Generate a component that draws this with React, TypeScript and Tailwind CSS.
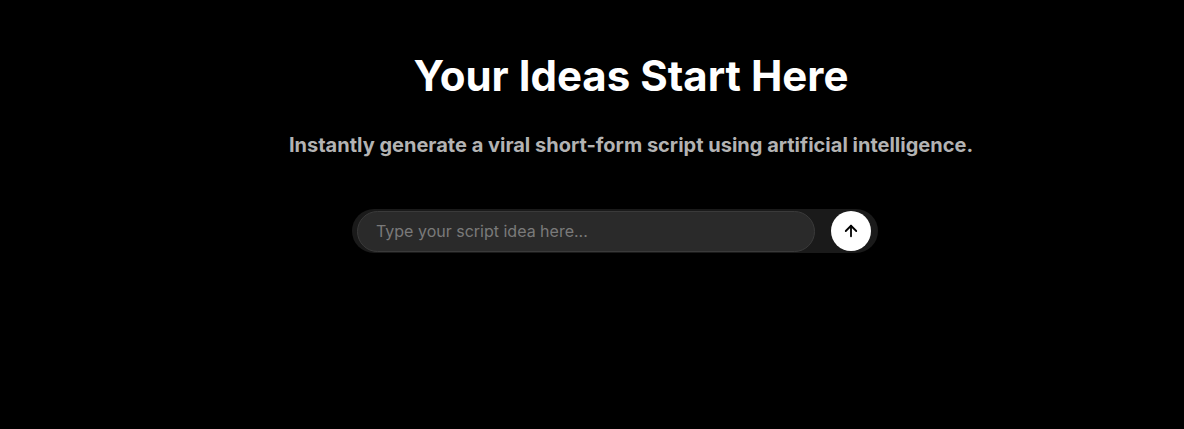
import React from "react";

export default function App() {
  return (
    <div
      className="w-full min-h-[429px] bg-black flex flex-col items-center pl-[78px] pt-[51px]"
      style={{ fontFamily: "Inter, 'Noto Sans', sans-serif" }}
    >
      <h1 className="text-[42px] leading-[1.2] font-bold text-white">Your Ideas Start Here</h1>
      <p className="mt-[30px] text-[20px] leading-[28px] font-bold text-[#b3b3b3]">
        Instantly generate a viral short-form script using artificial intelligence.
      </p>
      <div className="mt-[50px] mr-[32px] w-[526px] h-[44px] rounded-full bg-[#1a1a1a] flex items-center pl-[5px] pr-[7px] gap-[16px]">
        <input
          type="text"
          placeholder="Type your script idea here..."
          className="flex-1 h-[41px] rounded-full bg-[#2a2a2a] border border-[#3a3a3a] pl-[18px] text-base text-white placeholder:text-[#7a7a7a] outline-none"
        />
        <button className="w-10 h-10 rounded-full bg-white flex items-center justify-center shrink-0">
          <svg width="18" height="18" viewBox="0 0 24 24" fill="none" stroke="black" strokeWidth="2.4" strokeLinecap="round" strokeLinejoin="round">
            <path d="M12 19V5" />
            <path d="M5 12l7-7 7 7" />
          </svg>
        </button>
      </div>
    </div>
  );
}
